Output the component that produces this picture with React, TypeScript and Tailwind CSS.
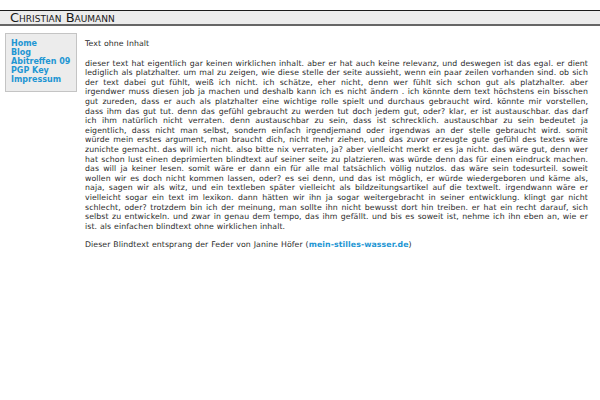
const links = ['Home', 'Blog', 'Abitreffen 09', 'PGP Key', 'Impressum'];

// line breaks follow the reference
const lines = [
  'dieser text hat eigentlich gar keinen wirklichen inhalt. aber er hat auch keine relevanz, und deswegen ist das egal. er dient',
  'lediglich als platzhalter. um mal zu zeigen, wie diese stelle der seite aussieht, wenn ein paar zeilen vorhanden sind. ob sich',
  'der text dabei gut fühlt, weiß ich nicht. ich schätze, eher nicht, denn wer fühlt sich schon gut als platzhalter. aber',
  'irgendwer muss diesen job ja machen und deshalb kann ich es nicht ändern . ich könnte dem text höchstens ein bisschen',
  'gut zureden, dass er auch als platzhalter eine wichtige rolle spielt und durchaus gebraucht wird. könnte mir vorstellen,',
  'dass ihm das gut tut. denn das gefühl gebraucht zu werden tut doch jedem gut, oder? klar, er ist austauschbar. das darf',
  'ich ihm natürlich nicht verraten. denn austauschbar zu sein, dass ist schrecklich. austauschbar zu sein bedeutet ja',
  'eigentlich, dass nicht man selbst, sondern einfach irgendjemand oder irgendwas an der stelle gebraucht wird. somit',
  'würde mein erstes argument, man braucht dich, nicht mehr ziehen, und das zuvor erzeugte gute gefühl des textes wäre',
  'zunichte gemacht. das will ich nicht. also bitte nix verraten, ja? aber vielleicht merkt er es ja nicht. das wäre gut, denn wer',
  'hat schon lust einen deprimierten blindtext auf seiner seite zu platzieren. was würde denn das für einen eindruck machen.',
  'das will ja keiner lesen. somit wäre er dann ein für alle mal tatsächlich völlig nutzlos. das wäre sein todesurteil. soweit',
  'wollen wir es doch nicht kommen lassen, oder? es sei denn, und das ist möglich, er würde wiedergeboren und käme als,',
  'naja, sagen wir als witz, und ein textleben später vielleicht als bildzeitungsartikel auf die textwelt. irgendwann wäre er',
  'vielleicht sogar ein text im lexikon. dann hätten wir ihn ja sogar weitergebracht in seiner entwicklung. klingt gar nicht',
  'schlecht, oder? trotzdem bin ich der meinung, man sollte ihn nicht bewusst dort hin treiben. er hat ein recht darauf, sich',
  'selbst zu entwickeln. und zwar in genau dem tempo, das ihm gefällt. und bis es soweit ist, nehme ich ihn eben an, wie er',
];
const lastLine = 'ist. als einfachen blindtext ohne wirklichen inhalt.';

export default function App() {
  return (
    <div className="min-h-[400px] w-[600px] bg-white pt-[10px] font-['DejaVu_Sans',Verdana,sans-serif] text-[#2b2b2b]">
      {/* header bar */}
      <header className="h-[16px] border-t border-b-2 border-t-[#1a1a1a] border-b-[#666] bg-[#ececec] pl-[10px]">
        <h1 className="text-[13px] leading-[13px] text-[#1a1a1a] [font-variant:small-caps]">Christian Baumann</h1>
      </header>

      <div className="mt-[7px] flex items-start">
        {/* sidebar */}
        <nav className="ml-[5px] w-[72px] shrink-0 border border-[#c4c4c4] bg-[#ececec] pt-[5px] pb-[7px] pl-[5px]">
          <ul>
            {links.map((l) => (
              <li key={l}>
                <a href="#" className="block text-[8px] font-bold leading-[9px] text-[#1e96d3]">
                  {l}
                </a>
              </li>
            ))}
          </ul>
        </nav>

        {/* content */}
        <main className="ml-[8px] mr-[12px] flex-1 pt-[6px] text-[7.8px] leading-[9.6px] tracking-[0.08px] [word-spacing:0.3px]">
          <p className="mb-[10px]">Text ohne Inhalt</p>
          <p>
            {lines.map((line, i) => (
              <span key={i} className="block whitespace-nowrap text-justify [text-align-last:justify]">
                {line}
              </span>
            ))}
            <span className="block">{lastLine}</span>
          </p>
          <p className="mt-[9px]">
            Dieser Blindtext entsprang der Feder von Janine Höfer (
            <a href="#" className="font-bold text-[#1e96d3]">
              mein-stilles-wasser.de
            </a>
            )
          </p>
        </main>
      </div>
    </div>
  );
}
